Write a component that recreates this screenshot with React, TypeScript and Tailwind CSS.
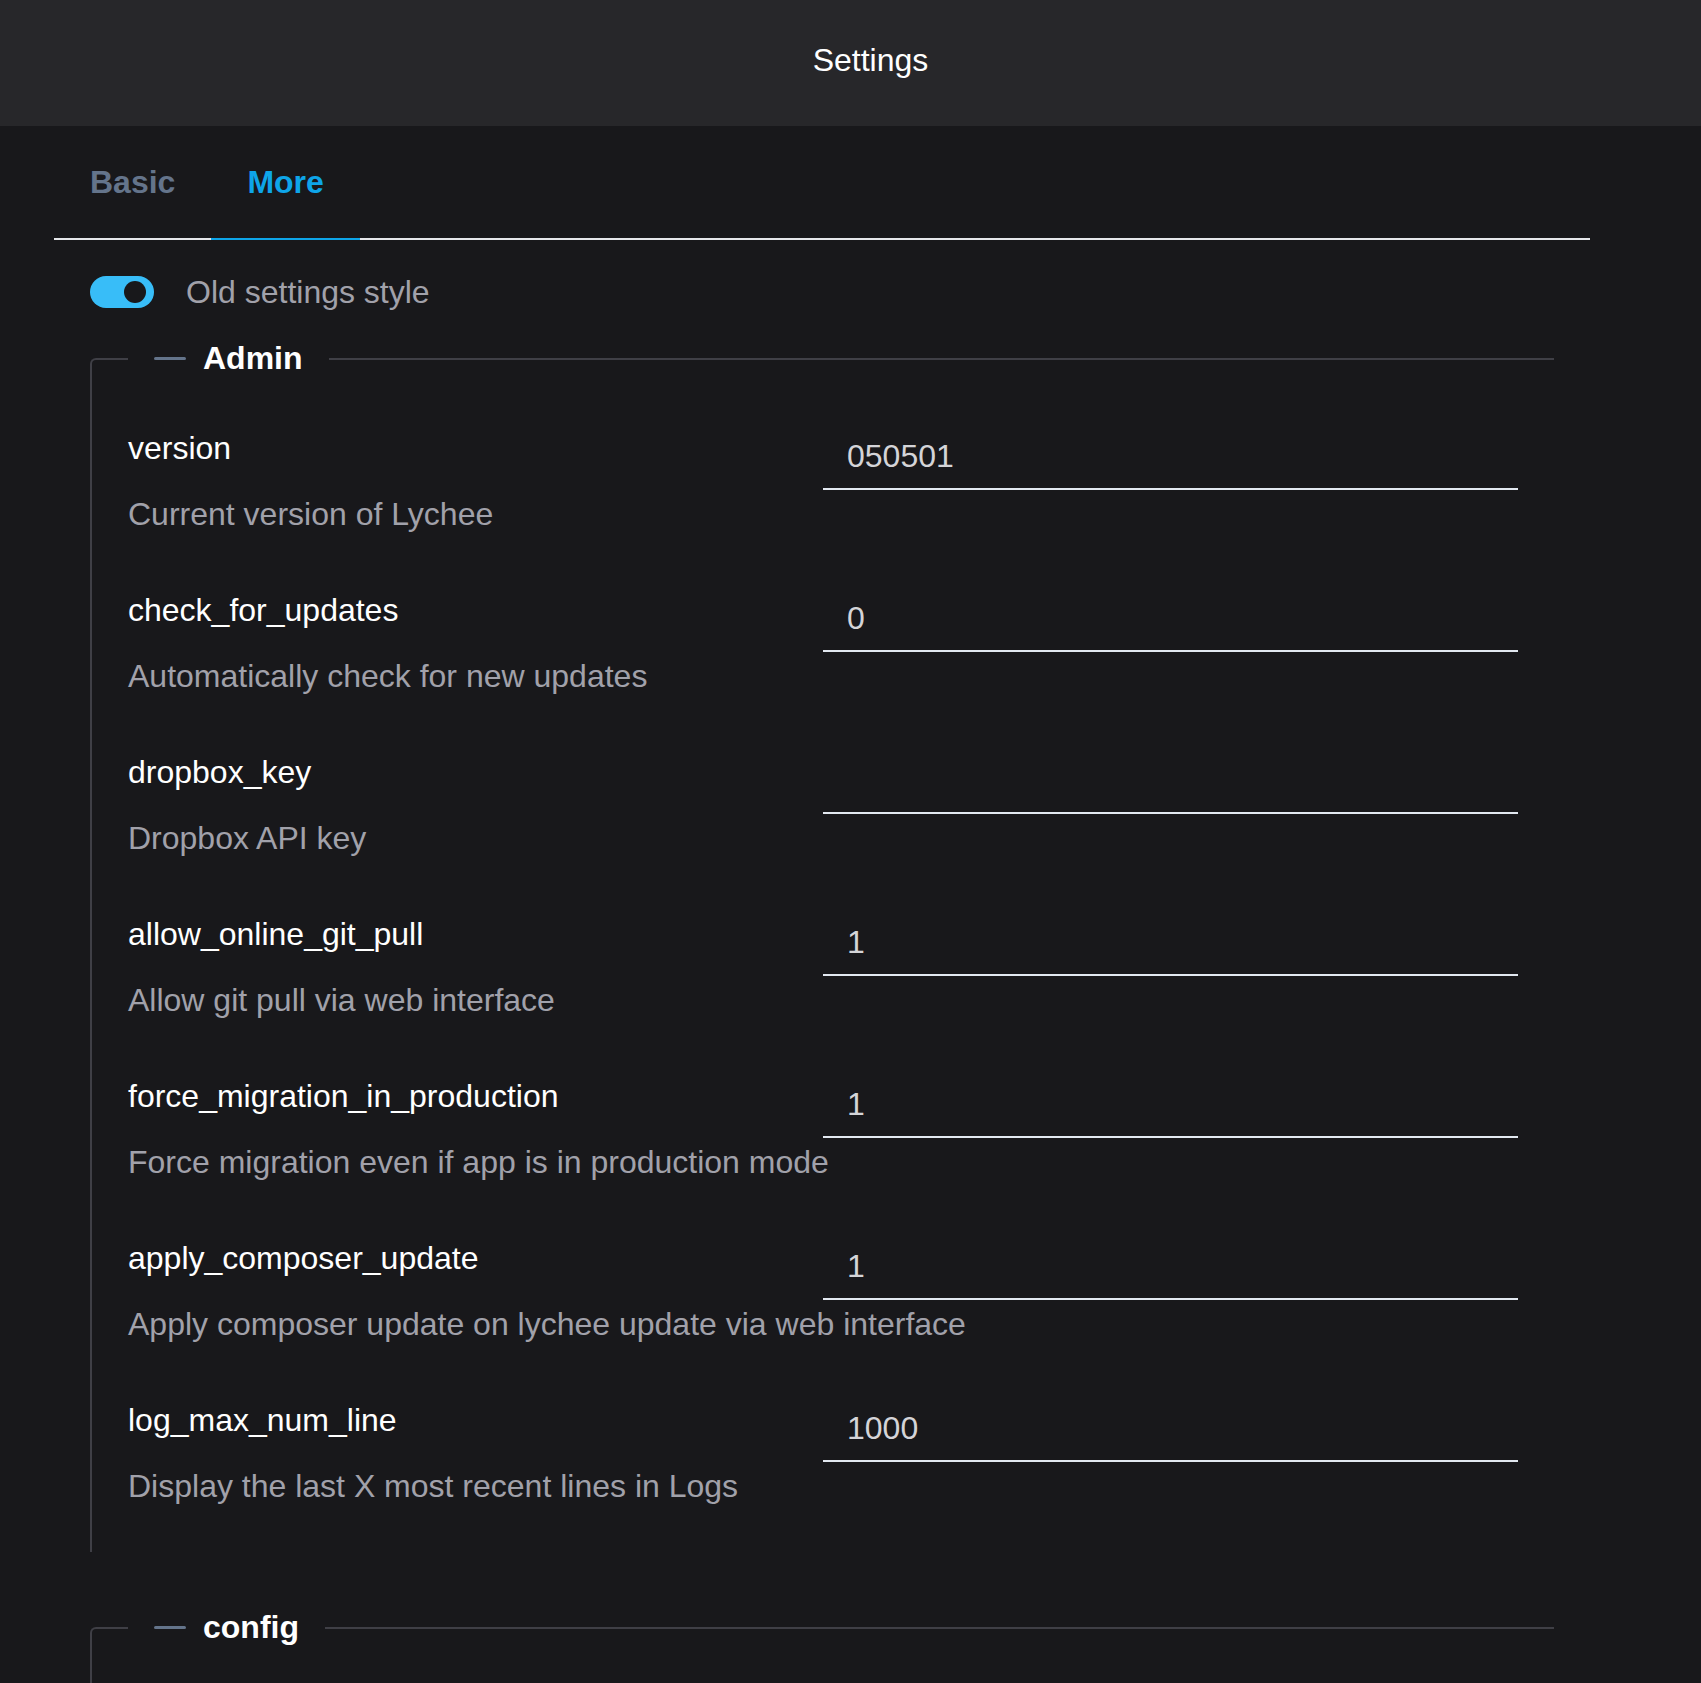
import React from "react";

type Setting = {
  key: string;
  value: string;
  description: string;
};

const adminSettings: Setting[] = [
  { key: "version", value: "050501", description: "Current version of Lychee" },
  { key: "check_for_updates", value: "0", description: "Automatically check for new updates" },
  { key: "dropbox_key", value: "", description: "Dropbox API key" },
  { key: "allow_online_git_pull", value: "1", description: "Allow git pull via web interface" },
  {
    key: "force_migration_in_production",
    value: "1",
    description: "Force migration even if app is in production mode",
  },
  {
    key: "apply_composer_update",
    value: "1",
    description: "Apply composer update on lychee update via web interface",
  },
  {
    key: "log_max_num_line",
    value: "1000",
    description: "Display the last X most recent lines in Logs",
  },
];

const SettingRow: React.FC<{ setting: Setting }> = ({ setting }) => {
  return (
    <div className="flex flex-col">
      <div className="flex items-start">
        <label className="w-1/2 leading-[48px] text-white">{setting.key}</label>
        <input
          type="text"
          defaultValue={setting.value}
          className="w-1/2 h-[66px] px-[24px] bg-transparent border-b-2 border-[#e2e8f0] text-[#d4d4d8] outline-none"
        />
      </div>
      <p className="leading-[48px] text-[#a1a1aa] whitespace-nowrap">{setting.description}</p>
    </div>
  );
};

const Section: React.FC<{ title: string; settings: Setting[]; className?: string }> = ({
  title,
  settings,
  className,
}) => {
  return (
    <section className={`mx-[36px] ${className ?? ""}`}>
      {/* Legend row */}
      <div className="flex h-[48px]">
        <div className="w-[38px] h-[24px] self-end border-t-2 border-l-2 border-[#3f3f46] rounded-tl-[6px]" />
        <div className="flex items-center gap-[17px] px-[26px]">
          <span className="w-[32px] h-[3px] rounded-full bg-[#64748b]" />
          <span className="font-bold text-white leading-[48px]">{title}</span>
        </div>
        <div className="flex-1 h-[24px] self-end border-t-2 border-[#3f3f46]" />
      </div>

      {/* Body */}
      <div className="min-h-[120px] border-l-2 border-[#3f3f46] pl-[36px] pr-[36px] pt-[42px] pb-[42px] flex flex-col gap-[48px]">
        {settings.map((s) => (
          <SettingRow key={s.key} setting={s} />
        ))}
      </div>
    </section>
  );
};

export default function App() {
  return (
    <div className="h-[1683px] overflow-hidden bg-[#18181b] font-['Liberation_Sans',Arial,sans-serif] text-[32px]">
      {/* Header */}
      <header className="h-[126px] bg-[#27272a] flex items-center justify-center pl-[40px] pb-[6px]">
        <h1 className="text-white text-[32px] font-normal">Settings</h1>
      </header>

      <div className="ml-[54px] w-[1536px]">
        {/* Tabs */}
        <nav className="flex border-b-2 border-[#e5e7eb]">
          <button className="px-[36px] py-[32px] leading-[48px] font-bold text-[#64748b] -mb-[2px] border-b-2 border-transparent">
            Basic
          </button>
          <button className="px-[36px] py-[32px] leading-[48px] font-bold text-[#0ea5e9] -mb-[2px] border-b-2 border-[#0ea5e9]">
            More
          </button>
        </nav>

        {/* Toggle */}
        <div className="flex items-center gap-[32px] ml-[36px] mt-[36px]">
          <div className="relative w-[64px] h-[32px] rounded-full bg-[#38bdf8]">
            <span className="absolute right-[8px] top-[5px] w-[22px] h-[22px] rounded-full bg-[#18181b]" />
          </div>
          <span className="text-[#a1a1aa] leading-[32px]">Old settings style</span>
        </div>

        <Section title="Admin" settings={adminSettings} className="mt-[26px]" />
        <Section title="config" settings={[]} className="mt-[51px]" />
      </div>
    </div>
  );
}
